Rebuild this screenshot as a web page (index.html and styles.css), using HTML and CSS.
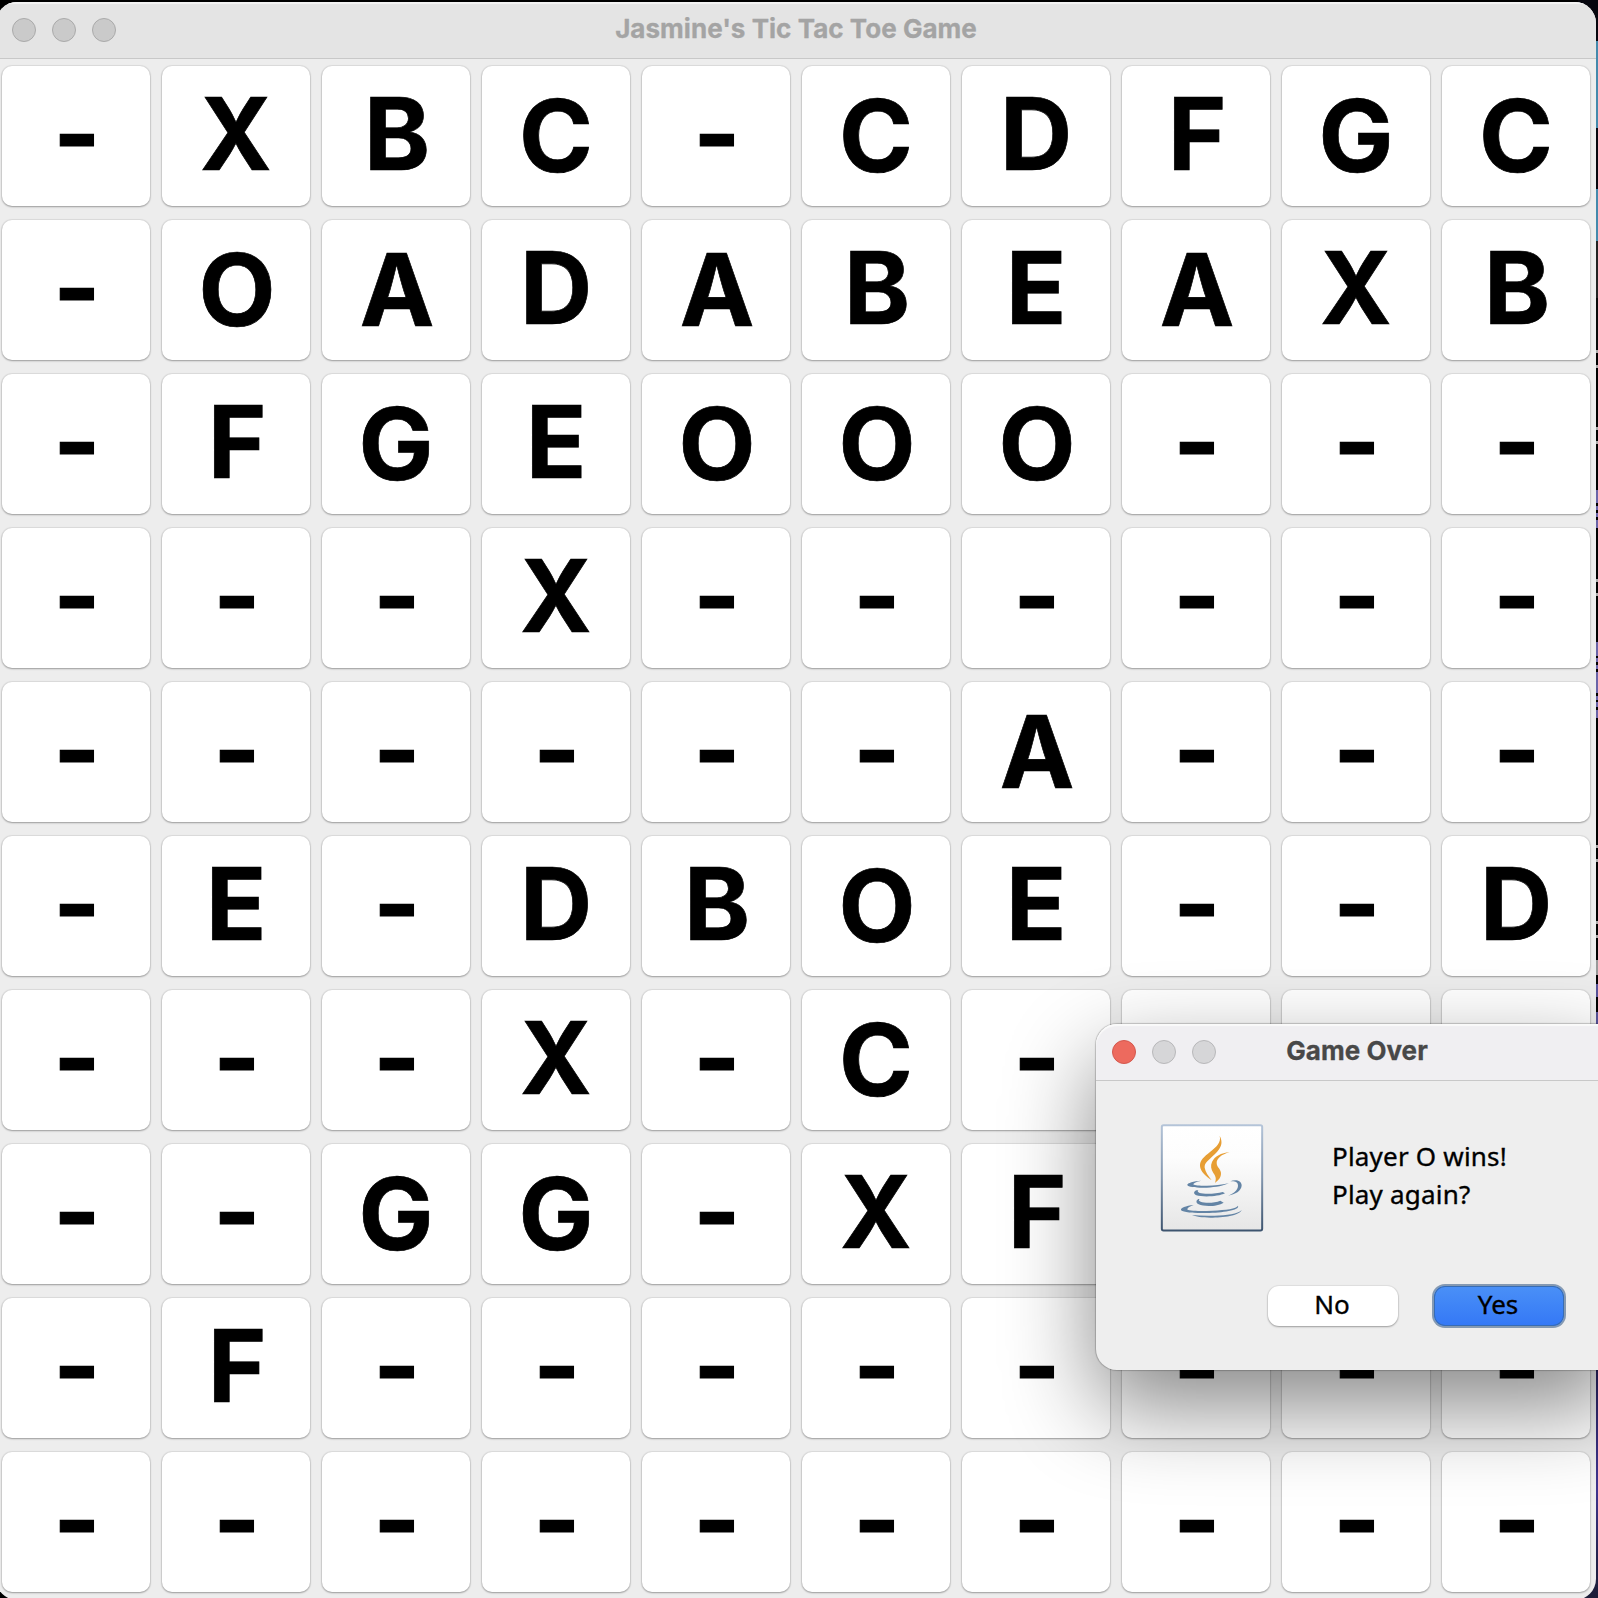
FILE: index.html
```html
<!DOCTYPE html>
<html lang="en">
<head>
<meta charset="utf-8">
<title>Jasmine's Tic Tac Toe Game</title>
<link rel="stylesheet" href="styles.css">
</head>
<body>
<main class="window">
  <header class="titlebar">
    <div class="lights"><i class="light"></i><i class="light"></i><i class="light"></i></div>
    <h1 class="title">Jasmine's Tic Tac Toe Game</h1>
  </header>
  <div class="board" id="board"></div>
</main>
<section class="dialog">
  <header class="titlebar dialog-bar">
    <div class="lights"><i class="light close"></i><i class="light"></i><i class="light"></i></div>
    <h2 class="title dialog-title">Game Over</h2>
  </header>
  <div class="message">
    <svg class="java" viewBox="30 24 312 330" width="104" height="110">
      <defs>
        <linearGradient id="edge" x1="0" y1="0" x2="0" y2="1"><stop offset="0" stop-color="#b4c4d8"/><stop offset=".5" stop-color="#8296ae"/><stop offset="1" stop-color="#3d546f"/></linearGradient>
        <linearGradient id="paper" x1="0" y1="0" x2="0" y2="1"><stop offset="0" stop-color="#fff"/><stop offset=".3" stop-color="#fdfdfd"/><stop offset="1" stop-color="#e6e6e6"/></linearGradient>
      </defs>
      <rect x="35.500" y="30.500" width="301" height="316" rx="5" fill="url(#paper)" stroke="url(#edge)" stroke-width="6"/>
      <g fill="#e79e34">
        <path d="M209 62C220 83 214 98 195 117C177 135 162 143 164 158C166 171 176 184 185 196C168 184 151 170 150 153C149 136 163 125 180 111C201 94 214 82 209 62Z"/>
        <path d="M239 112C214 118 200 131 200 144C200 157 214 163 213 177C212 190 203 197 195 204C199 192 198 185 190 174C183 164 181 151 186 141C194 124 213 114 239 112Z"/>
      </g>
      <g fill="#6384a5">
        <path d="M153 197C132 198 111 204 112 210C114 217 144 219 170 218C198 217 223 212 236 205C214 210 194 212 171 212C149 213 130 211 130 208C130 204 140 200 153 197Z"/>
        <path d="M241 199C254 192 275 195 275 211C275 228 255 239 235 242C251 235 264 225 264 212C264 200 254 198 241 199Z"/>
        <path d="M139 226C130 230 130 237 139 241C158 247 207 245 225 235L218 231C199 237 162 238 149 234C143 232 142 229 145 226Z"/>
        <path d="M145 252C137 257 138 264 146 268C162 276 203 275 221 263L211 257C194 264 166 265 152 260C146 258 145 255 149 252Z"/>
        <path d="M131 270C107 272 91 280 93 285C96 292 131 295 170 294C216 293 270 286 264 272C259 281 228 285 188 287C149 289 112 288 112 283C112 278 121 274 131 270Z"/>
        <path d="M275 285C269 302 219 308 181 308C157 308 136 305 126 300C147 302 169 303 194 302C230 301 264 297 275 285Z"/>
      </g>
    </svg>
    <p class="text"><span>Player O wins!</span><br><span>Play again?</span></p>
  </div>
  <div class="actions">
    <button class="btn">No</button>
    <button class="btn primary">Yes</button>
  </div>
</section>
<script src="board.js"></script>
</body>
</html>
```
FILE: board.js
```js
// A space is a cell without a visible mark.
const rows = [
  "-XBC-CDFGC",
  "-OADABEAXB",
  "-FGEOOO---",
  "---X------",
  "------A---",
  "-E-DBOE--D",
  "---X-C-   ",
  "--GG-XF   ",
  "-F--------",
  "----------"
];
const board = document.getElementById("board");
for (const row of rows) {
  for (const mark of row) {
    const cell = document.createElement("div");
    cell.className = "cell";
    if (mark !== " ") {
      const label = document.createElement("span");
      label.className = "mark";
      if ("-ABFO".includes(mark)) label.classList.add("shifted");
      if ("ACGO".includes(mark)) label.classList.add("low");
      if (mark === "-") label.classList.add("empty");
      if (mark === "X") label.classList.add("narrow");
      label.textContent = mark;
      cell.append(label);
    }
    board.append(cell);
  }
}
```
FILE: styles.css
```css
* { box-sizing: border-box; }
html { overflow: hidden; }
body {
  margin: 0;
  width: 1598px;
  height: 1598px;
  overflow: hidden;
  position: relative;
  font-family: Inter, "Liberation Sans", sans-serif;
  padding-top: 2px;
  background: linear-gradient(#06060e 0 41px, #4489ac 41px 128px, #07070f 128px 189px, #4489ac 189px 241px, #222 241px 298px, #080808 298px 350px, #aaa 350px 353px, #000 353px 365px, #aaa 365px 368px, #000 368px 427px, #aaa 427px 430px, #000 430px 441px, #aaa 441px 444px, #000 444px 490px, #6a64a8 490px 503px, #000 503px 506px, #6a64a8 506px 510px, #000 510px 513px, #6a64a8 513px 517px, #000 517px 520px, #6a64a8 520px 528px, #000 528px 579px, #aaa 579px 582px, #000 582px 593px, #aaa 593px 596px, #000 596px 642px, #6a64a8 642px 656px, #000 656px 658px, #6a64a8 658px 662px, #000 662px 665px, #6a64a8 665px 669px, #000 669px 672px, #6a64a8 672px 693px, #000 693px 696px, #6a64a8 696px 700px, #000 700px 702px, #6a64a8 702px 707px, #000 707px 710px, #6a64a8 710px 718px, #000 718px 845px, #aaa 845px 848px, #000 848px 859px, #aaa 859px 862px, #000 862px 921px, #aaa 921px 924px, #000 924px 935px, #aaa 935px 938px, #000 938px 960px, #999 960px 975px, #000 975px 984px, #58539a 984px 997px, #000 997px 1012px, #58539a 1012px 1024px, #2a2360 1370px, #3f3590 1490px, #22214a 1560px, #1c1d38 1598px) right top / 20px 100% no-repeat #000;
}
.window {
  width: 1600px;
  height: 1598px;
  margin-left: -4px;
  background: #ededed;
  border-radius: 21px;
  overflow: hidden;
}
.titlebar {
  display: grid;
  grid-template-columns: 130px 1fr 130px;
  align-items: center;
  height: 57px;
  background: #e4e4e4;
  border-bottom: 1px solid #c8c8c8;
  box-shadow: inset 0 2px 1px #f4f4f4;
}
.lights { display: flex; gap: 16px; padding-left: 16px; }
.light {
  flex: none;
  width: 24px;
  height: 24px;
  border-radius: 50%;
  background: #cacaca;
  border: 1px solid #aaa;
}
.title {
  margin: 0 0 2px;
  justify-self: center;
  white-space: nowrap;
  font-size: 26px;
  font-weight: 700;
  line-height: 32px;
  letter-spacing: .04px;
  color: #a4a4a4;
  -webkit-text-stroke: .3px currentColor;
}
.board {
  display: grid;
  grid-template-columns: repeat(10, 148px);
  grid-auto-rows: 140px;
  gap: 14px 12px;
  padding: 7px 0 0 6px;
}
.cell {
  display: flex;
  align-items: center;
  justify-content: center;
  background: #fff;
  border-radius: 10px;
  box-shadow: 0 0 1px 1px rgba(0,0,0,.07), 0 1px 2px rgba(0,0,0,.3);
}
.mark {
  font-size: 100px;
  font-weight: 700;
  line-height: 140px;
  margin-top: -4px;
  color: #000;
  -webkit-text-stroke: .7px #000;
}
.shifted { padding-left: 2px; }
.low { margin-top: -1px; }
.empty { margin-top: -5px; -webkit-text-stroke-width: 1.2px; }
.narrow { transform: scaleX(.965); }
.dialog {
  position: absolute;
  left: 1096px;
  top: 1024px;
  width: 522px;
  height: 346px;
  border-radius: 21px;
  background: #eee;
  box-shadow: 0 0 1px 1px rgba(0,0,0,.2), 0 36px 90px rgba(0,0,0,.48);
}
.dialog-bar {
  background: #f0eff2;
  border-radius: 21px 21px 0 0;
  box-shadow: inset 0 2px 1px #fafafa;
}
.dialog-bar .light { background: #d6d6d8; border-color: #b8b8ba; }
.dialog-bar .close { background: #ed6a5e; border-color: #d4584e; }
.dialog-title { color: #484848; }
.message {
  display: flex;
  gap: 68px;
  padding: 42px 0 0 64px;
}
.java { flex: none; display: block; }
.text, .btn {
  font-family: "Noto Sans", "Open Sans", sans-serif;
  font-size: 26px;
  color: #000;
  -webkit-text-stroke: .35px #000;
}
.text { margin: 14px 0 0; line-height: 38px; letter-spacing: .2px; }
.actions {
  display: flex;
  justify-content: flex-end;
  gap: 36px;
  padding: 53px 54px 0 0;
}
.btn {
  width: 130px;
  height: 40px;
  padding: 0 2px 3px 0;
  border: 0;
  border-radius: 11px;
  background: #fff;
  line-height: 37px;
  box-shadow: 0 0 1px 1px rgba(0,0,0,.06), 0 1px 2px rgba(0,0,0,.3);
}
.primary {
  background: linear-gradient(#4a90f7, #3478f6);
  box-shadow: inset 0 0 0 1px #376cb4, 0 0 0 2px #8499b2;
}
```
